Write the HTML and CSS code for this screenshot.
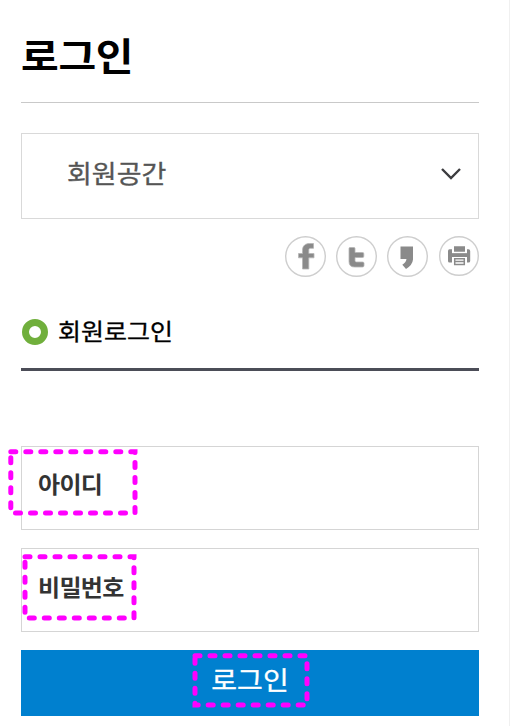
FILE: index.html
```html
<!DOCTYPE html>
<html lang="ko">
<head>
<meta charset="utf-8">
<title>로그인</title>
<link rel="stylesheet" href="styles.css">
</head>
<body>
<main class="page">
  <h1 class="title"><span>로그인</span></h1>
  <div class="select">
    <span class="select-label">회원공간</span>
    <svg class="chevron" width="20" height="12" viewBox="0 0 20 12"><path d="M1 1 L10 10 L19 1" fill="none" stroke="#3c3c3f" stroke-width="2.4"/></svg>
  </div>
  <div class="share">
    <svg class="icon" viewBox="0 0 41 41"><circle cx="20.5" cy="20.5" r="19.8"/><path d="M17.5 33V21.8H13.5V17.5H17.5V14.5C17.5 9.5 20.5 7.5 24.5 7.5H28.5V12.3H25.7C24.2 12.3 23.8 13 23.8 14.2V17.5H29V21.8H23.8V33Z" class="bold"/></svg>
    <svg class="icon" viewBox="0 0 41 41"><circle cx="20.5" cy="20.5" r="19.8"/><path d="M13 12.5Q13 11.5 14 11.5H18Q19 11.5 19 12.5V16.5H26.5Q27.8 16.5 27.8 17.8V20.2Q27.8 21.5 26.5 21.5H19V24.5Q19 26 20.5 26H26.5Q28 26 28 27.3V29.5Q28 31 26.5 31H18.5Q13 31 13 25.5Z" class="bold"/></svg>
    <svg class="icon" viewBox="0 0 41 41"><circle cx="20.5" cy="20.5" r="19.8"/><path d="M13.5 10.5H26V23.5Q25.5 29 19 33L15.3 28.7Q19 26.5 19.5 23H13.5Z"/></svg>
    <svg class="icon print" viewBox="0 0 40 40"><circle cx="20" cy="20" r="19.3"/><path d="M15 10.3H26V15.8H15ZM9 15Q9 13.3 10.5 13.3H13V17.3H28V13.3H29.5Q31.2 13.3 31.2 15V25Q31.2 26.5 29.5 26.5H28V21H13V26.5H10.5Q9 26.5 9 25Z"/><path d="M13 18.7H28" class="slot"/><path class="paper" d="M15.7 22.7H25.3V28.5H15.7ZM16 25.5H25"/></svg>
  </div>
  <h2 class="heading"><span class="ring"></span><span class="heading-label">회원로그인</span></h2>
  <form class="form">
    <div class="field"><label class="id">아이디</label>
      <svg class="mark mark-id" width="136" height="72"><path d="M5.8 5.7H130V67H5.8Z"/></svg>
    </div>
    <div class="field"><label class="pw">비밀번호</label>
      <svg class="mark mark-pw" width="120" height="72"><path d="M5 5.7H114V67H5Z"/></svg>
    </div>
    <button class="submit" type="button"><span>로그인</span>
      <svg class="mark mark-go" width="122" height="60"><path d="M5 5.8H117V55H5Z"/></svg>
    </button>
  </form>
</main>
</body>
</html>
```
FILE: styles.css
```css
* { box-sizing: border-box; }
body {
  margin: 0;
  background: #fff;
  font-family: "Noto Sans CJK KR", sans-serif;
}
.page {
  height: 726px;
  padding: 0 30px 0 21px;
  border-right: 1px solid #f0f0f0;
  overflow: hidden;
}
.title {
  height: 103px;
  margin: 0;
  padding-top: 23px;
  border-bottom: 1px solid #c9c9c9;
  font-size: 41px;
  line-height: 60px;
  font-weight: 700;
  letter-spacing: -0.3px;
  color: #000;
}
.title span { display: inline-block; transform: scaleY(0.92); }
.select {
  display: flex;
  align-items: center;
  justify-content: space-between;
  height: 86px;
  margin-top: 30px;
  padding: 0 17px 4px 45px;
  border: 1px solid #d9d9d9;
}
.select-label {
  margin-top: -2px;
  font-size: 27px;
  line-height: 40px;
  color: #555;
  -webkit-text-stroke: 0.35px #555;
  transform: scaleY(0.92);
}
.share {
  display: flex;
  justify-content: flex-end;
  gap: 10px;
  margin-top: 17px;
}
.icon { width: 41px; height: 41px; fill: #8a8a8a; }
.icon circle { fill: #fff; stroke: #cecece; stroke-width: 1.4; }
.icon .bold { stroke: #b5b5b5; stroke-width: 0.8; }
.print { width: 40px; height: 40px; margin-left: 1px; }
.icon .slot { stroke: #8a8a8a; stroke-width: 2.2; }
.icon .paper { fill: #fff; stroke: #8a8a8a; stroke-width: 1.5; }
.heading {
  display: flex;
  align-items: center;
  height: 76px;
  margin: 18px 0 0;
  border-bottom: 3px solid #4b4d57;
  font-weight: 400;
}
.ring {
  width: 26px;
  height: 26px;
  margin: 0 10px 0 1px;
  border: 7px solid #70af3c;
  border-radius: 50%;
}
.heading-label {
  margin-top: -4px;
  font-size: 25px;
  line-height: 36px;
  color: #000;
  -webkit-text-stroke: 0.35px #000;
  transform: scaleY(0.92);
}
.form { margin-top: 75px; }
.field {
  position: relative;
  display: flex;
  align-items: center;
  height: 84px;
  margin-bottom: 18px;
  padding: 0 0 8px 16px;
  border: 1px solid #d5d5d5;
}
.field label {
  font-size: 24px;
  line-height: 36px;
  font-weight: 700;
  letter-spacing: -0.7px;
  color: #333;
  transform: scaleY(0.95);
}
.submit {
  position: relative;
  display: flex;
  justify-content: center;
  width: 100%;
  height: 66px;
  padding: 8px 0 0;
  border: 0;
  background: #0080cf;
  color: #fff;
  font-family: inherit;
  font-size: 28px;
  line-height: 42px;
}
.submit span { -webkit-text-stroke: 0.35px #fff; transform: scaleY(0.92); height: 42px; }
.mark { position: absolute; fill: none; stroke: #f0f; stroke-width: 5; stroke-linecap: round; stroke-dasharray: 5 10; }
.mark-id { left: -17px; top: -1px; }
.mark-pw { left: -2px; top: 2px; }
.mark-go { left: 169px; top: 0; }
```
